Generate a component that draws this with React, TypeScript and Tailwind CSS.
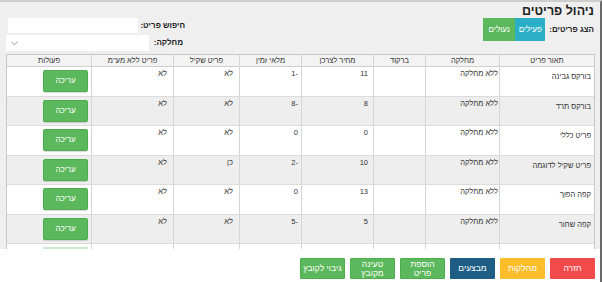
import React from "react";

const rows = [
  { name: "בורקס גבינה", dept: "ללא מחלקה", barcode: "", price: "11", stock: "-1", weighed: "לא", noVat: "לא" },
  { name: "בורקס תרד", dept: "ללא מחלקה", barcode: "", price: "8", stock: "-8", weighed: "לא", noVat: "לא" },
  { name: "פריט כללי", dept: "ללא מחלקה", barcode: "", price: "0", stock: "0", weighed: "לא", noVat: "לא" },
  { name: "פריט שקיל לדוגמה", dept: "ללא מחלקה", barcode: "", price: "10", stock: "-2", weighed: "כן", noVat: "לא" },
  { name: "קפה הפוך", dept: "ללא מחלקה", barcode: "", price: "13", stock: "0", weighed: "לא", noVat: "לא" },
  { name: "קפה שחור", dept: "ללא מחלקה", barcode: "", price: "5", stock: "-5", weighed: "לא", noVat: "לא" },
  { name: "", dept: "", barcode: "", price: "", stock: "", weighed: "", noVat: "" },
];

const headers = ["תאור פריט", "מחלקה", "ברקוד", "מחיר לצרכן", "מלאי זמין", "פריט שקיל", 'פריט ללא מע"מ', "פעולות"];

const gridCols = "grid grid-cols-[95px_74px_52px_72px_62px_66px_82px_84px]";

function EditButton() {
  return (
    <button className="w-[45px] h-[22px] rounded-[2px] bg-[#5cb85c] border border-[#4cae4c] text-white text-[8px] shadow-[0_1px_1px_rgba(0,0,0,0.15)]">
      עריכה
    </button>
  );
}

function FooterButton({ label, className }: { label: React.ReactNode; className: string }) {
  return (
    <button
      className={`w-[45px] h-[21px] rounded-[1px] text-white text-[8.5px] leading-[9px] flex items-center justify-center text-center ${className}`}
    >
      {label}
    </button>
  );
}

export default function App() {
  return (
    <div
      dir="rtl"
      className="w-[602px] h-[282px] overflow-hidden bg-white border-t-2 border-t-[#cdcdcd] border-r-2 border-r-[#6a6a6a] flex flex-col text-[#222] font-['Liberation_Sans',Arial,sans-serif]"
    >
      <div className="bg-[#efefef] flex flex-col">
        {/* top toolbar */}
        <div className="h-[52px] flex justify-between pr-[6px] pl-[6px]">
          <div className="flex flex-col">
            <h1 className="text-[12.5px] font-bold leading-[14px] mt-[2px]">ניהול פריטים</h1>
            <div className="flex items-center">
              <span className="text-[8px] font-bold ml-[4px]">הצג פריטים:</span>
              <button className="w-[30px] h-[23px] bg-[#2aafc6] text-white text-[8px]">פעילים</button>
              <button className="w-[32px] h-[23px] bg-[#5cb85c] text-white text-[8px]">נעולים</button>
            </div>
          </div>
          <div className="w-[180px] flex flex-col pt-[16px] gap-[2px]">
            <div className="flex justify-between items-center h-[15px] pr-[1px]">
              <span className="text-[8px] font-bold">חיפוש פריט:</span>
              <div className="w-[130px] h-[15px] bg-white ml-[2px]" />
            </div>
            <div className="flex justify-between items-center h-[16px] pr-[3px]">
              <span className="text-[8px] font-bold">מחלקה:</span>
              <div className="w-[143px] h-[16px] bg-white flex items-center justify-end pl-[5px]">
                <svg width="7" height="5" viewBox="0 0 7 5" fill="none">
                  <path d="M0.5 0.8L3.5 3.8L6.5 0.8" stroke="#888" strokeWidth="0.9" />
                </svg>
              </div>
            </div>
          </div>
        </div>

        {/* table */}
        <div className="h-[195px] ml-[6px] mr-[5px] overflow-hidden border-t border-l border-r border-[#c9c9c9] bg-white">
          <div className={`${gridCols} h-[12px] bg-[#f3f3f3] border-b border-[#cfcfcf]`}>
            {headers.map((h, i) => (
              <div
                key={h}
                className={`text-[7.5px] leading-[12px] text-center text-[#333] ${i < headers.length - 1 ? "border-l border-[#d6d6d6]" : ""}`}
              >
                {h}
              </div>
            ))}
          </div>
          {rows.map((r, idx) => (
            <div
              key={idx}
              className={`${gridCols} h-[29.5px] border-b border-[#dcdcdc] text-[7.5px] leading-[10px] text-[#333] ${idx % 2 === 1 ? "bg-[#eeeeee]" : "bg-white"}`}
            >
              <div className="border-l border-[#d6d6d6] pr-[3px] pt-[5px]">{r.name}</div>
              <div className="border-l border-[#d6d6d6] pr-[1px] pt-[2px]">{r.dept}</div>
              <div className="border-l border-[#d6d6d6]">{r.barcode}</div>
              <div className="border-l border-[#d6d6d6] pr-[5px] pt-[2px]">{r.price}</div>
              <div className="border-l border-[#d6d6d6] pr-[3px] pt-[2px]">{r.stock}</div>
              <div className="border-l border-[#d6d6d6] pr-[6px] pt-[2px]">{r.weighed}</div>
              <div className="border-l border-[#d6d6d6] pr-[6px] pt-[2px]">{r.noVat}</div>
              <div className="pr-[3px] pt-[3px]">{idx < 6 ? <EditButton /> : <div className="w-[45px] h-[22px] bg-[#cfe9cf]" />}</div>
            </div>
          ))}
        </div>
      </div>

      {/* footer actions */}
      <div className="flex gap-[5px] pt-[9px] pr-[5px]">
        <FooterButton label="חזרה" className="bg-[#f2494b]" />
        <FooterButton label="מחלקות" className="bg-[#fbbd2a]" />
        <FooterButton label="מבצעים" className="bg-[#1e5e84]" />
        <FooterButton label={<>הוספת<br />פריט</>} className="bg-[#5cb85c] border border-[#4cae4c]" />
        <FooterButton label={<>טעינה<br />מקובץ</>} className="bg-[#5cb85c] border border-[#4cae4c]" />
        <FooterButton label="גיבוי לקובץ" className="bg-[#5cb85c] border border-[#4cae4c]" />
      </div>
    </div>
  );
}
